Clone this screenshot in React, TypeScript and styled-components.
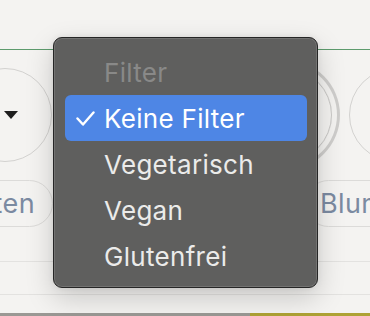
import React from "react";
import styled, { createGlobalStyle } from "styled-components";

const Global = createGlobalStyle`
  html, body { margin: 0; padding: 0; }
  body {
    width: 370px;
    height: 316px;
    overflow: hidden;
    background: #f4f3f1;
    font-family: Inter, "Noto Sans", sans-serif;
  }
`;

const Page = styled.div`
  position: relative;
  width: 370px;
  height: 316px;
  overflow: hidden;
  background: #f4f3f1;
`;

const TopBar = styled.div`
  height: 50px;
  border-bottom: 1.5px solid #5d9b6d;
  box-sizing: border-box;
`;

const CircleRow = styled.div`
  display: flex;
  gap: 17px;
  margin-left: -42px;
  padding-top: 18px;
  height: 112px;
  box-sizing: border-box;
`;

const CircleSlot = styled.div<{ $w: number }>`
  flex: 0 0 ${(p) => p.$w}px;
  display: flex;
  justify-content: center;
`;

const Circle = styled.div<{ $selected?: boolean }>`
  width: 94px;
  height: 94px;
  border-radius: 50%;
  box-sizing: border-box;
  border: 1.5px solid #d3d2d0;
  display: flex;
  align-items: center;
  justify-content: center;
  ${(p) => (p.$selected ? "border-color: #cbcac8; box-shadow: 0 0 0 5px #f4f3f1, 0 0 0 8px #cfcecc;" : "")}
`;

const Arrow = styled.div`
  width: 0;
  height: 0;
  margin-left: 12px;
  border-left: 7px solid transparent;
  border-right: 7px solid transparent;
  border-top: 8px solid #1e1e1e;
`;

const ChipRow = styled.div`
  display: flex;
  gap: 12px;
  margin-left: -80px;
  margin-top: 18px;
  height: 47px;
`;

const Pill = styled.div<{ $w: number; $end?: boolean }>`
  flex: 0 0 ${(p) => p.$w}px;
  height: 47px;
  border: 1.5px solid #dcdbd9;
  border-radius: 24px;
  box-sizing: border-box;
  display: flex;
  align-items: center;
  justify-content: ${(p) => (p.$end ? "flex-end" : "flex-start")};
  padding: ${(p) => (p.$end ? "0 17px 0 0" : "0 0 0 14px")};
  font-size: 27px;
  letter-spacing: 0.4px;
  color: #7b8aa1;
  white-space: nowrap;
  overflow: hidden;
`;

const Rule = styled.div<{ $h: number }>`
  height: ${(p) => p.$h}px;
  border-bottom: 1.5px solid #e3e2e0;
  box-sizing: border-box;
`;

const Strip = styled.div`
  display: flex;
  height: 10px;
  margin-top: 18px;
`;

const StripPart = styled.div<{ $w: number; $bg: string }>`
  flex: 0 0 ${(p) => p.$w}px;
  background: ${(p) => p.$bg};
`;

const Menu = styled.div`
  position: absolute;
  left: 53px;
  top: 37px;
  width: 265px;
  height: 251px;
  box-sizing: border-box;
  padding: 11px 10px 8px 11px;
  background: #5f5f5e;
  border: 1px solid #262626;
  border-radius: 9px;
  box-shadow: inset 0 0 0 1px rgba(255, 255, 255, 0.13),
    0 10px 28px rgba(0, 0, 0, 0.18), 0 0 6px rgba(0, 0, 0, 0.08);
  display: flex;
  flex-direction: column;
  font-family: Inter, "Noto Sans", sans-serif;
`;

const Item = styled.div<{ $kind: "header" | "selected" | "normal" }>`
  height: 46px;
  display: flex;
  align-items: center;
  padding-left: 39px;
  position: relative;
  border-radius: 6px;
  font-size: 26px;
  letter-spacing: 0.3px;
  background: ${(p) => (p.$kind === "selected" ? "#4e86e5" : "transparent")};
  color: ${(p) =>
    p.$kind === "header" ? "#898988" : p.$kind === "selected" ? "#ffffff" : "#ebebea"};
`;

const Check = styled.svg`
  position: absolute;
  left: 11px;
  top: 16px;
  width: 19px;
  height: 15px;
`;

const items = ["Vegetarisch", "Vegan", "Glutenfrei"];

export default function App() {
  return (
    <>
      <Global />
      <Page>
        <TopBar />
        <CircleRow>
          <CircleSlot $w={94}>
            <Circle>
              <Arrow />
            </Circle>
          </CircleSlot>
          <CircleSlot $w={152}>
            <Circle />
          </CircleSlot>
          <CircleSlot $w={94}>
            <Circle $selected />
          </CircleSlot>
          <CircleSlot $w={94}>
            <Circle />
          </CircleSlot>
        </CircleRow>
        <ChipRow>
          <Pill $w={133} $end>
            ten
          </Pill>
          <Pill $w={108}>Obst</Pill>
          <Pill $w={108}>Kräuter</Pill>
          <Pill $w={130}>Blumen</Pill>
        </ChipRow>
        <Rule $h={35} />
        <Rule $h={33} />
        <Strip>
          <StripPart $w={250} $bg="#9a9894" />
          <StripPart $w={120} $bg="#aea235" />
        </Strip>
        <Menu>
          <Item $kind="header">Filter</Item>
          <Item $kind="selected">
            <Check viewBox="0 0 19 15">
              <polyline
                points="1.5,7.5 7,13.5 17.5,1.5"
                fill="none"
                stroke="#ffffff"
                strokeWidth="2.4"
                strokeLinecap="round"
                strokeLinejoin="round"
              />
            </Check>
            Keine Filter
          </Item>
          {items.map((t) => (
            <Item key={t} $kind="normal">
              {t}
            </Item>
          ))}
        </Menu>
      </Page>
    </>
  );
}
